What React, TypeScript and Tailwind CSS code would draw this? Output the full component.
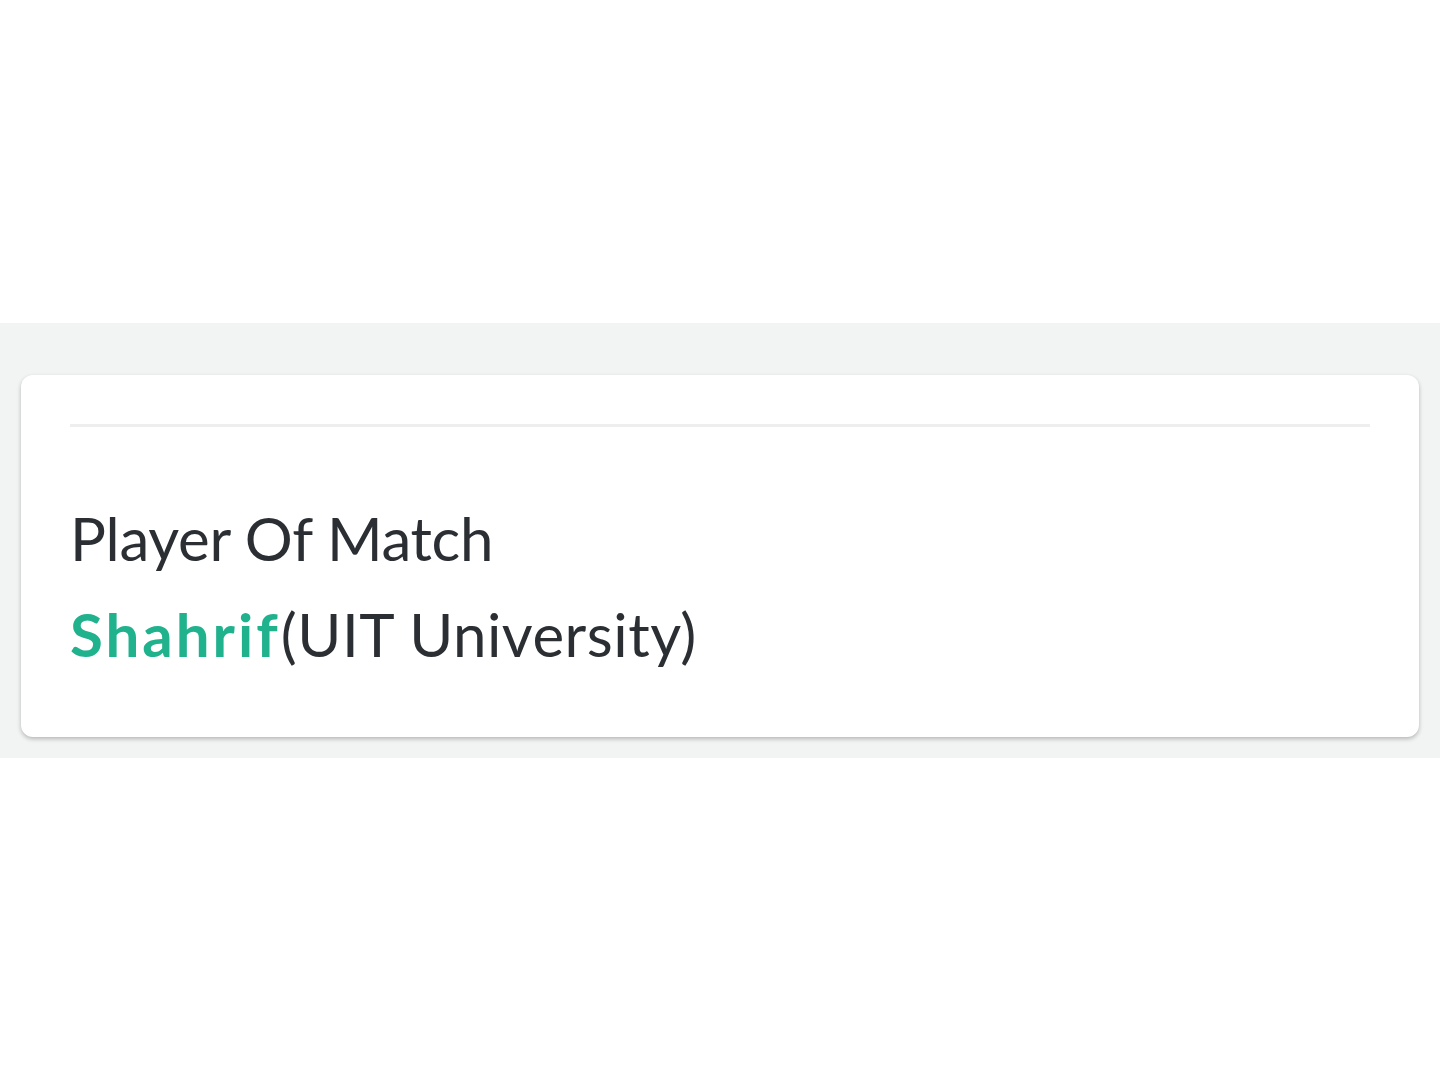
export default function App() {
  return (
    <div className="w-[1440px] h-[1080px] bg-white flex flex-col" style={{ fontFamily: "Lato, 'Noto Sans', sans-serif" }}>
      <div className="h-[323px]" />
      <div className="bg-[#f2f4f3] pt-[52px] px-[21px] pb-[21px]">
        <div className="bg-white rounded-[12px] shadow-[0_2px_4px_rgba(0,0,0,0.25)] px-[49px] pt-[49px] pb-[55px]">
          <div className="h-[3px] bg-[#eeeeee]" />
          <div className="mt-[63px] text-[60px] leading-[96px] text-[#2b2f33] tracking-[-0.3px]">Player Of Match</div>
          <div className="text-[60px] leading-[96px] text-[#2b2f33] tracking-[0.5px]">
            <span className="font-bold text-[#20b18d] tracking-[3px]">Shahrif</span>(UIT University)
          </div>
        </div>
      </div>
    </div>
  );
}
